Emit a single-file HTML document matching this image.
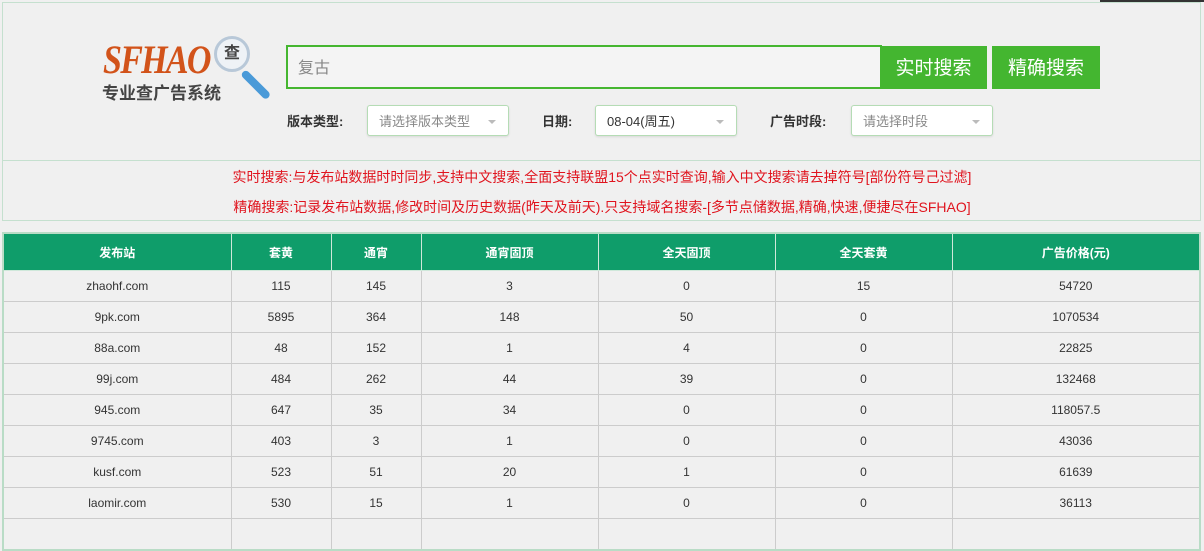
<!DOCTYPE html>
<html><head><meta charset="utf-8"><style>
body{margin:0;width:1204px;height:522px;overflow:hidden;background:#f0f0f0;font-family:"Liberation Sans","Noto Sans CJK SC",sans-serif;position:relative}
.box{position:absolute;left:2px;top:2px;width:1197px;height:217px;border:1px solid #c5e0cf;background:#f0f0f0}
.div{position:absolute;left:0;right:0;top:157px;border-top:1px solid #c5e0cf}
.inp{position:absolute;left:286px;top:45px;width:582px;height:40px;border:2px solid #45b630;background:#f4f4f4;font-size:16px;color:#888;line-height:44px;padding-left:10px;box-sizing:content-box}
.btn{position:absolute;top:46px;height:43px;background:#44b630;color:#fff;font-size:19px;line-height:45px;text-align:center}
.lbl{position:absolute;top:111px;font-size:13px;font-weight:bold;color:#333}
.sel{position:absolute;top:105px;height:31px;border:1px solid #b5dcb5;border-radius:3px;background:#fff;font-size:13px;color:#888;line-height:31px;padding-left:11px;box-sizing:border-box;box-shadow:0 1px 2px rgba(0,0,0,.1)}
.sel:after{content:"";position:absolute;right:12px;top:14px;border:4px solid transparent;border-top-color:#bbb}
.red{position:absolute;left:0;width:1204px;text-align:center;color:#e0141e;font-size:14px}
table{position:absolute;left:2px;top:232px;border-collapse:collapse;table-layout:fixed;width:1199px;border:2px solid #b9dcc6;font-size:12px;color:#333}
th{background:#0f9d6a;color:#fff;height:36px;padding:0;font-weight:bold;border:1px solid #cfe8da;font-size:12px}
td{height:30px;padding:0;text-align:center;border:1px solid #ccc;background:#f0f0f0}
</style></head><body>
<div style="position:absolute;left:1100px;top:0;width:104px;height:2px;background:#333"></div>
<div class="box"><div class="div"></div></div>
<div style="position:absolute;left:103px;top:36px;font:italic bold 40px 'Liberation Serif',serif;color:#d2531a;letter-spacing:-2px;transform:scaleX(.85);transform-origin:left">SFHAO</div>
<div style="position:absolute;left:214px;top:36px;width:30px;height:30px;border-radius:50%;border:3px solid #b8c8d8;background:#eef2f6;font-size:16px;font-weight:bold;color:#444;text-align:center;line-height:30px">查</div>
<div style="position:absolute;left:243px;top:68px;width:36px;height:8px;background:#4a9ad8;border-radius:4px;transform:rotate(45deg);transform-origin:left"></div>
<div style="position:absolute;left:102px;top:79px;font-size:17px;font-weight:bold;color:#444">专业查广告系统</div>
<div class="inp">复古</div>
<div class="btn" style="left:880px;width:107px">实时搜索</div>
<div class="btn" style="left:992px;width:108px">精确搜索</div>
<div class="lbl" style="left:287px">版本类型:</div>
<div class="sel" style="left:367px;width:142px">请选择版本类型</div>
<div class="lbl" style="left:542px">日期:</div>
<div class="sel" style="left:595px;width:142px;color:#333">08-04(周五)</div>
<div class="lbl" style="left:770px">广告时段:</div>
<div class="sel" style="left:851px;width:142px">请选择时段</div>
<div class="red" style="top:167px">实时搜索:与发布站数据时时同步,支持中文搜索,全面支持联盟15个点实时查询,输入中文搜索请去掉符号[部份符号己过滤]</div>
<div class="red" style="top:197px">精确搜索:记录发布站数据,修改时间及历史数据(昨天及前天).只支持域名搜索-[多节点储数据,精确,快速,便捷尽在SFHAO]</div>
<table>
<colgroup><col style="width:228px"><col style="width:100px"><col style="width:90px"><col style="width:177px"><col style="width:177px"><col style="width:177px"><col></colgroup>
<tr><th>发布站</th><th>套黄</th><th>通宵</th><th>通宵固顶</th><th>全天固顶</th><th>全天套黄</th><th>广告价格(元)</th></tr>
<tr><td>zhaohf.com</td><td>115</td><td>145</td><td>3</td><td>0</td><td>15</td><td>54720</td></tr>
<tr><td>9pk.com</td><td>5895</td><td>364</td><td>148</td><td>50</td><td>0</td><td>1070534</td></tr>
<tr><td>88a.com</td><td>48</td><td>152</td><td>1</td><td>4</td><td>0</td><td>22825</td></tr>
<tr><td>99j.com</td><td>484</td><td>262</td><td>44</td><td>39</td><td>0</td><td>132468</td></tr>
<tr><td>945.com</td><td>647</td><td>35</td><td>34</td><td>0</td><td>0</td><td>118057.5</td></tr>
<tr><td>9745.com</td><td>403</td><td>3</td><td>1</td><td>0</td><td>0</td><td>43036</td></tr>
<tr><td>kusf.com</td><td>523</td><td>51</td><td>20</td><td>1</td><td>0</td><td>61639</td></tr>
<tr><td>laomir.com</td><td>530</td><td>15</td><td>1</td><td>0</td><td>0</td><td>36113</td></tr>
<tr><td>&nbsp;</td><td></td><td></td><td></td><td></td><td></td><td></td></tr>
</table>
</body></html>
